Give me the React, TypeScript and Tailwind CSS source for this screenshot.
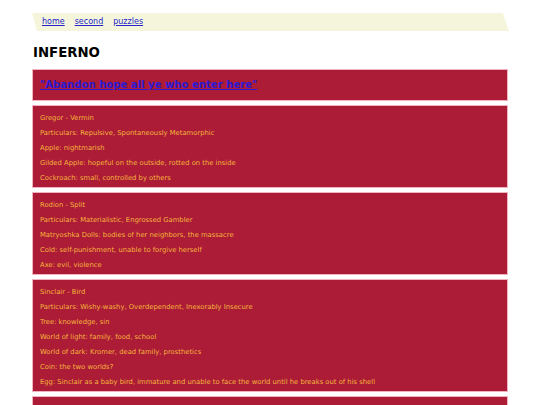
import React from "react";

type Entry = { title: string; lines: string[] };

const entries: Entry[] = [
  {
    title: "Gregor - Vermin",
    lines: [
      "Particulars: Repulsive, Spontaneously Metamorphic",
      "Apple: nightmarish",
      "Gilded Apple: hopeful on the outside, rotted on the inside",
      "Cockroach: small, controlled by others",
    ],
  },
  {
    title: "Rodion - Split",
    lines: [
      "Particulars: Materialistic, Engrossed Gambler",
      "Matryoshka Dolls: bodies of her neighbors, the massacre",
      "Cold: self-punishment, unable to forgive herself",
      "Axe: evil, violence",
    ],
  },
  {
    title: "Sinclair - Bird",
    lines: [
      "Particulars: Wishy-washy, Overdependent, Inexorably Insecure",
      "Tree: knowledge, sin",
      "World of light: family, food, school",
      "World of dark: Kromer, dead family, prosthetics",
      "Coin: the two worlds?",
      "Egg: Sinclair as a baby bird, immature and unable to face the world until he breaks out of his shell",
    ],
  },
  {
    title: "Demian - Mark",
    lines: [
      "Particulars: Mysterious, Knowing, Detached",
      "Mark of Cain: the chosen ones",
    ],
  },
];

const App = () => {
  return (
    <div className="min-h-screen bg-white font-['DejaVu_Sans',Verdana,sans-serif] pt-[13px]">
      {/* nav strip */}
      <nav className="ml-[32px] mr-[31px] h-[18px] bg-[#f5f5dc] [clip-path:polygon(0_0,calc(100%-6px)_0,100%_100%,5px_100%)] flex items-center gap-[10px] pl-[10px] text-[8px] leading-[10px]">
        <a href="#" className="text-[#2424c8] underline">home</a>
        <a href="#" className="text-[#2424c8] underline">second</a>
        <a href="#" className="text-[#2424c8] underline">puzzles</a>
      </nav>

      <div className="px-[32px]">
        <h1 className="mt-[14px] mb-[8px] text-[13.3px] leading-[16px] font-bold text-black pl-[1px]">
          INFERNO
        </h1>

        <div className="flex flex-col gap-[4px]">
          <div className="bg-[#ac1c37] border border-[#f2b3c0] px-[7px] py-[7px] text-[10.1px] leading-[16px]">
            <a href="#" className="font-bold text-[#2a1ad4] underline">
              "Abandon hope all ye who enter here"
            </a>
          </div>

          {entries.map((entry, i) => (
            <div key={i} className="bg-[#ac1c37] border border-[#f2b3c0] px-[7px] pt-[5px] pb-[1px] text-[6.8px] leading-[15px] text-[#f5b53a]">
              <p>{entry.title}</p>
              {entry.lines.map((line, j) => (
                <p key={j}>{line}</p>
              ))}
            </div>
          ))}
        </div>
      </div>
    </div>
  );
};

export default App;
